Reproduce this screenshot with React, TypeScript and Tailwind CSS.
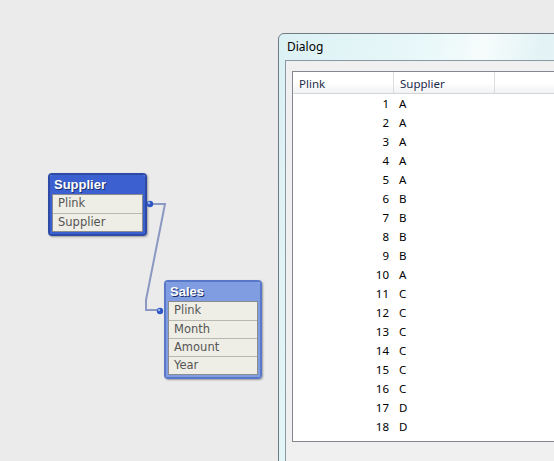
import React from "react";

const rows: [number, string][] = [
  [1, "A"], [2, "A"], [3, "A"], [4, "A"], [5, "A"], [6, "B"], [7, "B"], [8, "B"], [9, "B"],
  [10, "A"], [11, "C"], [12, "C"], [13, "C"], [14, "C"], [15, "C"], [16, "C"], [17, "D"], [18, "D"],
];

function TableBox({
  title,
  fields,
  left,
  top,
  width,
  titleBg,
  border,
}: {
  title: string;
  fields: string[];
  left: number;
  top: number;
  width: number;
  titleBg: string;
  border: string;
}) {
  return (
    <div
      className={`absolute rounded-[4px] border-2 ${border} shadow-[1px_1px_2px_rgba(0,0,0,0.35)] flex flex-col`}
      style={{ left, top, width }}
    >
      <div
        className={`h-[19px] ${titleBg} px-[4px] flex items-center text-white font-bold text-[13px] leading-none font-['Liberation_Sans',sans-serif] [text-shadow:1px_1px_0_#1b2f6b] rounded-t-[2px]`}
      >
        {title}
      </div>
      <div className={`${titleBg} px-[2px] pb-[2px]`}>
        <div className="border border-[#8c8c8c] bg-[#efeee6] flex flex-col">
          {fields.map((f, i) => (
            <div
              key={f}
              className={`h-[18px] flex items-center pl-[5px] text-[11.5px] text-[#555] font-['DejaVu_Sans',sans-serif] ${
                i > 0 ? "border-t border-[#b8b8b0]" : ""
              }`}
            >
              {f}
            </div>
          ))}
        </div>
      </div>
    </div>
  );
}

export default function App() {
  return (
    <div className="relative w-[554px] h-[461px] overflow-hidden bg-[#ebebeb]">
      <svg className="absolute left-0 top-0" width={554} height={461}>
        <polyline
          points="150,204 165,204 146,300 146,310 160,310"
          fill="none"
          stroke="#8a98c2"
          strokeWidth={2}
        />
      </svg>
      <TableBox
        title="Supplier"
        fields={["Plink", "Supplier"]}
        left={48}
        top={173}
        width={99}
        titleBg="bg-[#3c60cf]"
        border="border-[#2c4aa6]"
      />
      <TableBox
        title="Sales"
        fields={["Plink", "Month", "Amount", "Year"]}
        left={164}
        top={280}
        width={98}
        titleBg="bg-[#7f9de0]"
        border="border-[#5877c8]"
      />
      <svg className="absolute left-0 top-0" width={554} height={461}>
        <circle cx={150} cy={204} r={3.2} fill="#2f56c4" />
        <circle cx={149} cy={203} r={1.2} fill="#9fb6f0" />
        <circle cx={160} cy={311} r={3.2} fill="#2f56c4" />
        <circle cx={159} cy={310} r={1.2} fill="#9fb6f0" />
      </svg>

      {/* Dialog window */}
      <div className="absolute left-[278px] top-[33px] w-[300px] h-[450px] rounded-tl-[6px] border border-[#6e7b82] bg-[linear-gradient(100deg,#dcf1f4_0%,#e9f8f9_40%,#f6fcfc_55%,#e3f3f5_70%,#eaf8f9_100%)] flex flex-col">
        <div className="h-[26px] flex items-center pl-[8px] text-[12px] text-black font-['Noto_Sans',sans-serif]">
          Dialog
        </div>
        <div className="ml-[6px] flex-1 border-l border-t border-[#8a99a3] bg-[#f0f0f0] pt-[10px] pl-[6px]">
          <div className="w-[300px] h-[371px] border border-[#828790] bg-white flex flex-col font-['Noto_Sans',sans-serif] text-[11.5px]">
            <div className="h-[22px] flex bg-[linear-gradient(#ffffff_0%,#ffffff_50%,#f1f2f4_100%)] border-b border-[#d5d5d5] text-[#1e2a4a]">
              <div className="w-[101px] pl-[6px] pt-[2px] flex items-center border-r border-[#dcdde0]">Plink</div>
              <div className="w-[101px] pl-[6px] pt-[2px] flex items-center border-r border-[#dcdde0]">Supplier</div>
              <div className="flex-1" />
            </div>
            <div className="flex flex-col text-black">
              {rows.map(([n, s]) => (
                <div key={n} className="h-[19px] flex items-center">
                  <div className="w-[101px] text-right pr-[5px]">{n}</div>
                  <div className="pl-[5px]">{s}</div>
                </div>
              ))}
            </div>
          </div>
        </div>
      </div>
    </div>
  );
}
